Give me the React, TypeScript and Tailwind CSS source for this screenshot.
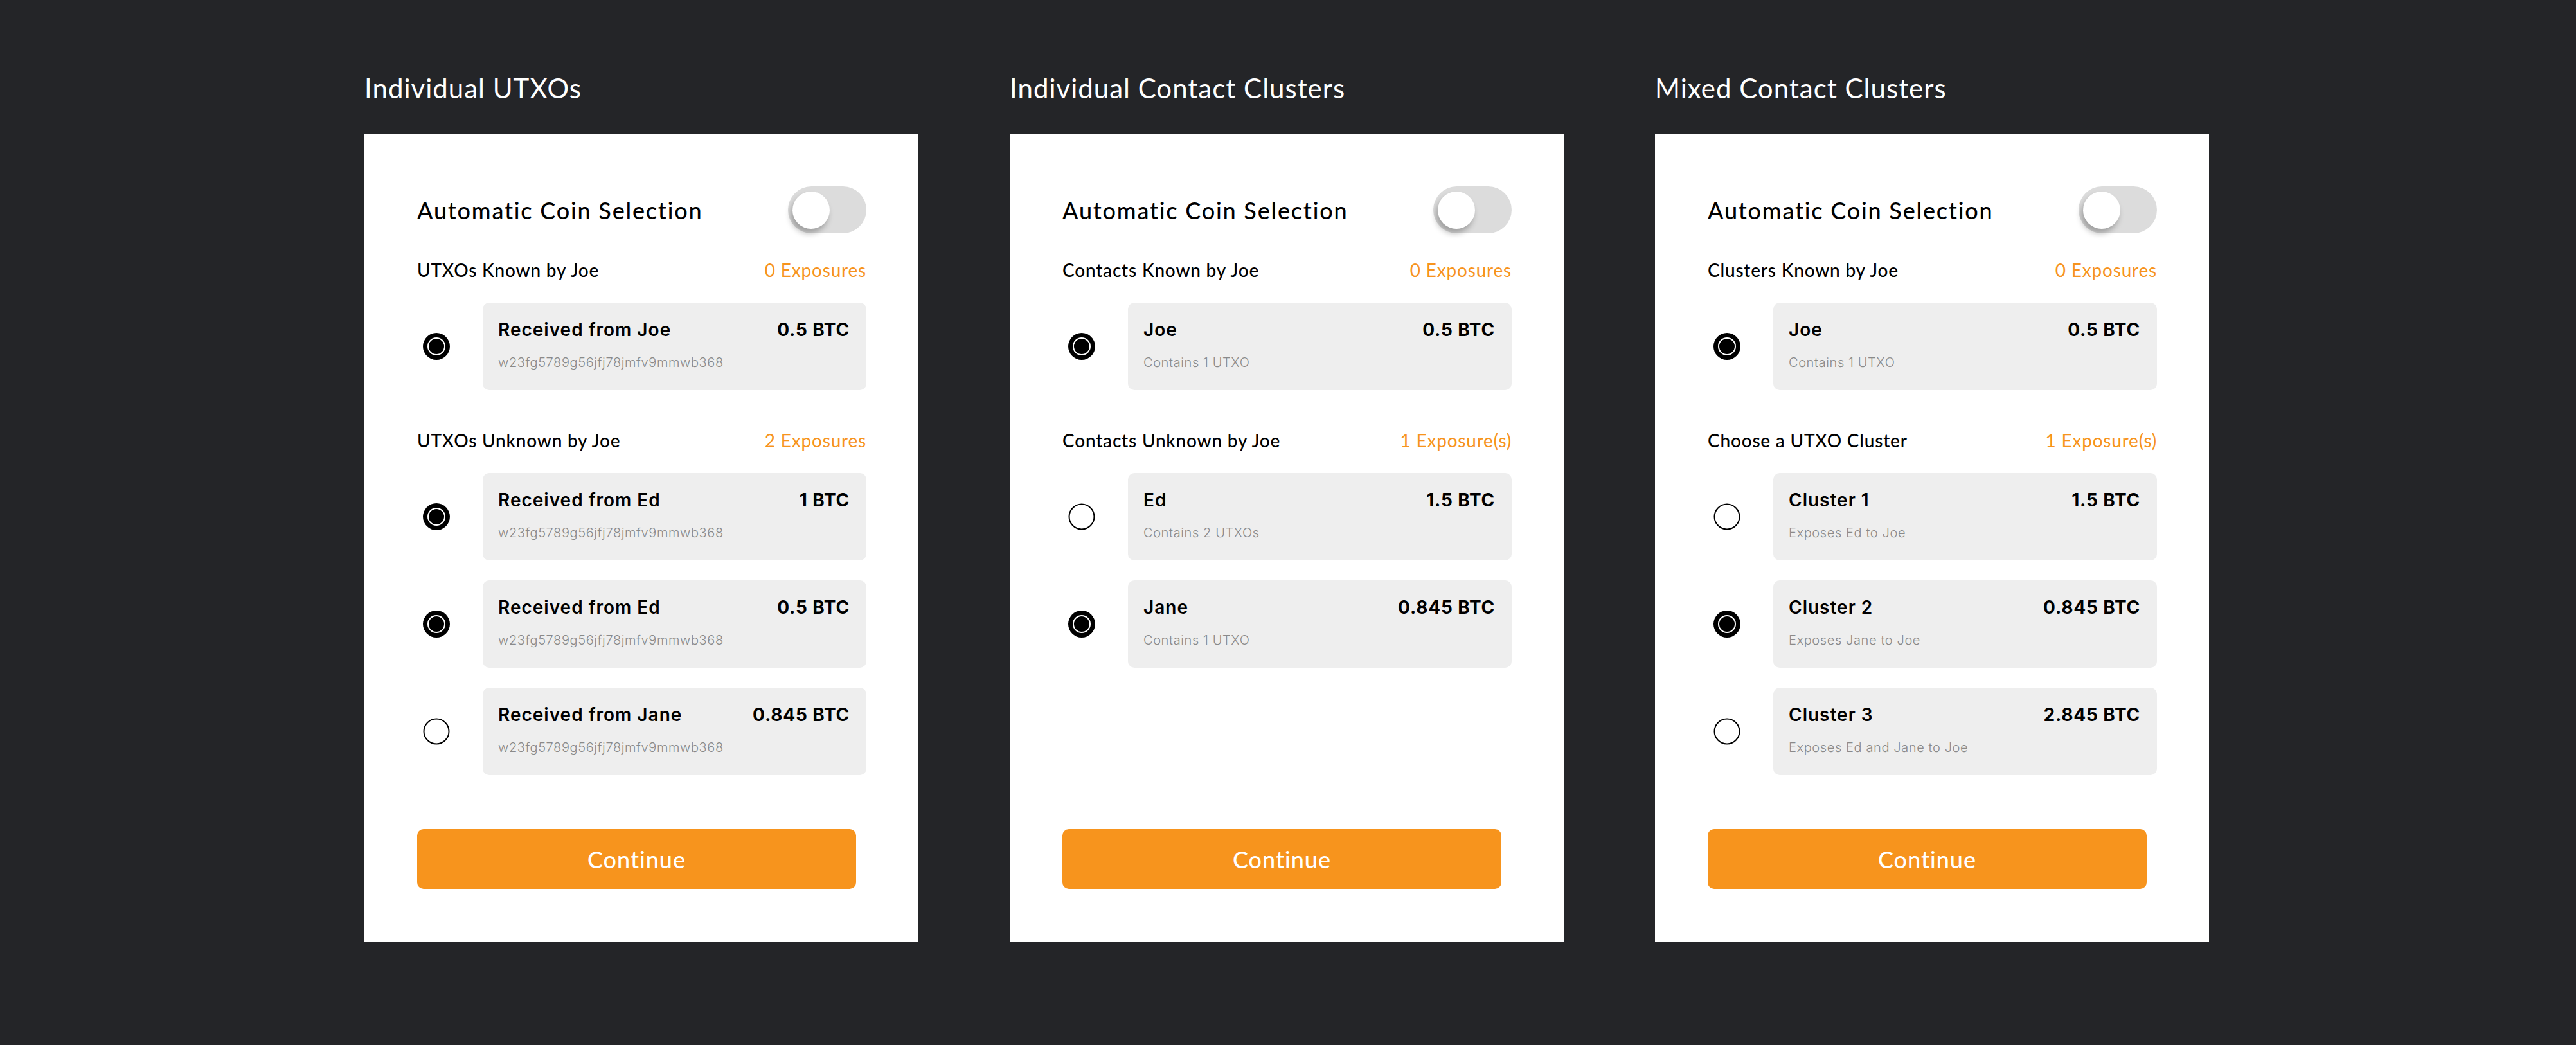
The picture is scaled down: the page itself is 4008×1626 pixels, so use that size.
import React from "react";

type Item = { title: string; amount: string; sub: string; selected: boolean };
type Section = { label: string; exposure: string; items: Item[] };
type PanelData = { heading: string; sections: Section[] };

const hash = "w23fg5789g56jfj78jmfv9mmwb368";

const panels: PanelData[] = [
  {
    heading: "Individual UTXOs",
    sections: [
      {
        label: "UTXOs Known by Joe",
        exposure: "0 Exposures",
        items: [{ title: "Received from Joe", amount: "0.5 BTC", sub: hash, selected: true }],
      },
      {
        label: "UTXOs Unknown by Joe",
        exposure: "2 Exposures",
        items: [
          { title: "Received from Ed", amount: "1 BTC", sub: hash, selected: true },
          { title: "Received from Ed", amount: "0.5 BTC", sub: hash, selected: true },
          { title: "Received from Jane", amount: "0.845 BTC", sub: hash, selected: false },
        ],
      },
    ],
  },
  {
    heading: "Individual Contact Clusters",
    sections: [
      {
        label: "Contacts Known by Joe",
        exposure: "0 Exposures",
        items: [{ title: "Joe", amount: "0.5 BTC", sub: "Contains 1 UTXO", selected: true }],
      },
      {
        label: "Contacts Unknown by Joe",
        exposure: "1 Exposure(s)",
        items: [
          { title: "Ed", amount: "1.5 BTC", sub: "Contains 2 UTXOs", selected: false },
          { title: "Jane", amount: "0.845 BTC", sub: "Contains 1 UTXO", selected: true },
        ],
      },
    ],
  },
  {
    heading: "Mixed Contact Clusters",
    sections: [
      {
        label: "Clusters Known by Joe",
        exposure: "0 Exposures",
        items: [{ title: "Joe", amount: "0.5 BTC", sub: "Contains 1 UTXO", selected: true }],
      },
      {
        label: "Choose a UTXO Cluster",
        exposure: "1 Exposure(s)",
        items: [
          { title: "Cluster 1", amount: "1.5 BTC", sub: "Exposes Ed to Joe", selected: false },
          { title: "Cluster 2", amount: "0.845 BTC", sub: "Exposes Jane to Joe", selected: true },
          { title: "Cluster 3", amount: "2.845 BTC", sub: "Exposes Ed and Jane to Joe", selected: false },
        ],
      },
    ],
  },
];

const HEAD = "font-['Lato',_'Noto_Sans',_sans-serif]";
const BODY = "font-['Inter',_'Noto_Sans',_sans-serif]";

function Radio({ on }: { on: boolean }) {
  return (
    <svg width="42" height="42" viewBox="0 0 42 42">
      {on ? (
        <>
          <circle cx="21" cy="21" r="21" fill="#000" />
          <circle cx="21" cy="21" r="13" fill="#000" stroke="#fff" strokeWidth="2" />
        </>
      ) : (
        <circle cx="21" cy="21" r="19.5" fill="#fff" stroke="#000" strokeWidth="2" />
      )}
    </svg>
  );
}

function Toggle() {
  return (
    <div className="relative w-[122px] h-[73px] rounded-full bg-[#dcdcdc] shrink-0">
      <div className="absolute left-[7px] top-[8px] w-[58px] h-[58px] rounded-full bg-white shadow-[-3px_7px_10px_rgba(0,0,0,0.28)]" />
    </div>
  );
}

function Row({ item }: { item: Item }) {
  return (
    <div className="flex items-center">
      <div className="w-[102px] pl-[9px] flex items-center">
        <Radio on={item.selected} />
      </div>
      <div className="flex-1 h-[136px] rounded-[10px] bg-[#eeeeee] pl-[24px] pr-[26px] pt-[26px]">
        <div className={`flex justify-between h-[33px] leading-[33px] ${BODY} text-black`}>
          <span className="text-[28px] font-semibold tracking-[1px]">{item.title}</span>
          <span className="text-[28px] font-bold tracking-[0.8px]">{item.amount}</span>
        </div>
        <div className={`mt-[23px] h-[23px] leading-[23px] text-[20px] font-light tracking-[0.6px] text-[#8a8a8a] ${BODY}`}>
          {item.sub}
        </div>
      </div>
    </div>
  );
}

function Panel({ data }: { data: PanelData }) {
  return (
    <div className="w-[862px] flex flex-col">
      <div className={`h-[50px] leading-[50px] text-[42px] tracking-[1px] text-white ${HEAD}`}>{data.heading}</div>
      <div className="mt-[46px] h-[1257px] bg-white pl-[82px] pr-[81px] pt-[82px] pb-[82px] flex flex-col">
        <div className="h-[73px] flex items-center justify-between">
          <span className={`text-[36px] font-medium tracking-[1.8px] text-black ${HEAD}`}>Automatic Coin Selection</span>
          <Toggle />
        </div>
        {data.sections.map((s, i) => (
          <div key={i} className={i === 0 ? "mt-[40px]" : "mt-[61px]"}>
            <div className={`flex justify-between h-[34px] leading-[34px] text-[28px] tracking-[0.8px] ${HEAD}`}>
              <span className="text-black font-medium">{s.label}</span>
              <span className="text-[#f7941d]">{s.exposure}</span>
            </div>
            <div className="mt-[34px] flex flex-col gap-[31px]">
              {s.items.map((it, j) => (
                <Row key={j} item={it} />
              ))}
            </div>
          </div>
        ))}
        <button
          className={`mt-auto w-[683px] h-[93px] rounded-[10px] bg-[#f7941d] text-white text-[36px] font-medium tracking-[1px] ${HEAD}`}
        >
          Continue
        </button>
      </div>
    </div>
  );
}

export default function App() {
  return (
    <div className="w-[4008px] h-[1626px] bg-[#242528] flex gap-[142px] pl-[567px] pt-[112px]">
      {panels.map((p, i) => (
        <Panel key={i} data={p} />
      ))}
    </div>
  );
}
